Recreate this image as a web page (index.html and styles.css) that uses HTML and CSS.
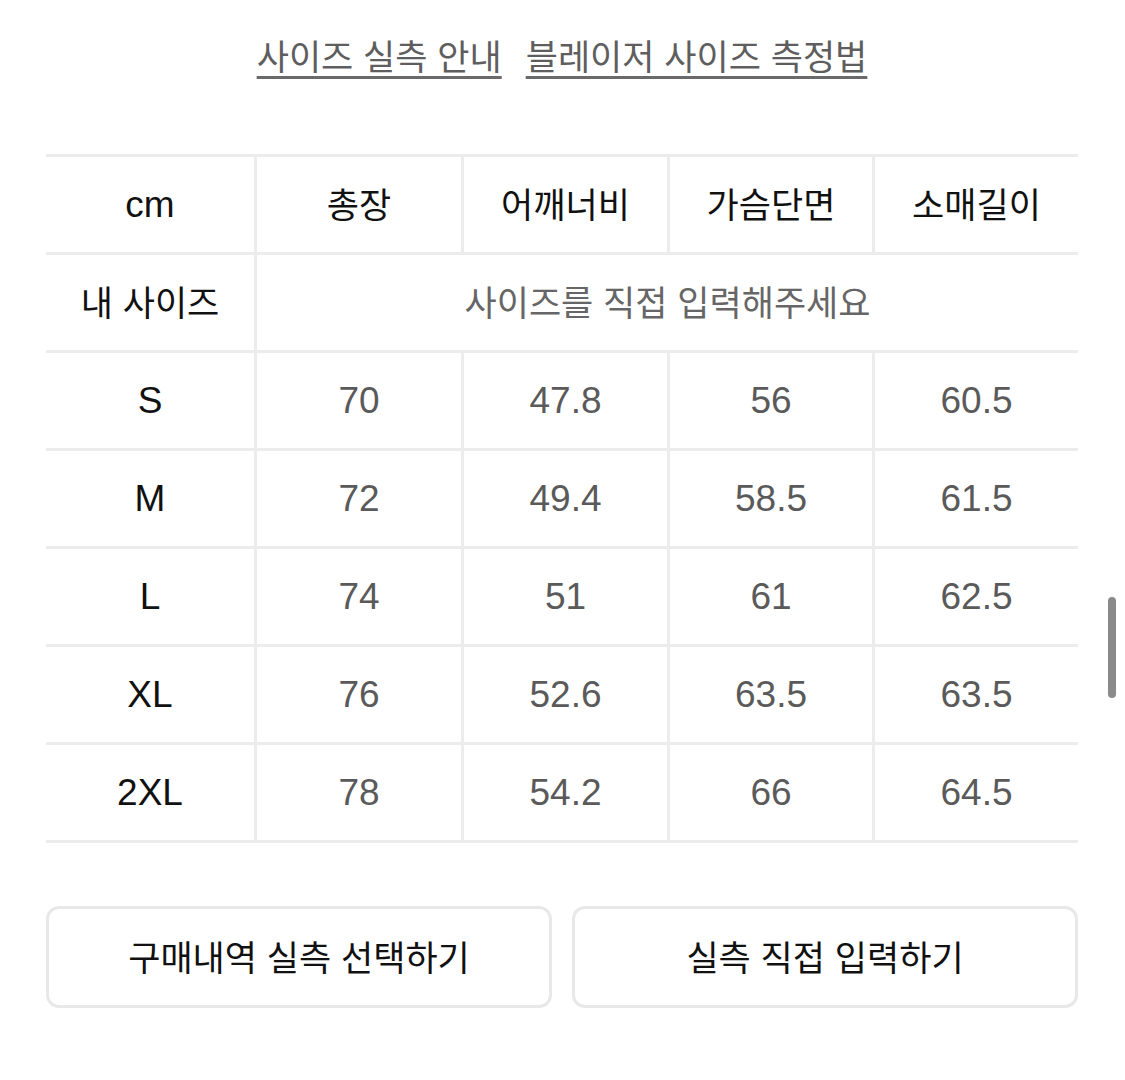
FILE: index.html
```html
<!DOCTYPE html>
<html lang="ko">
<head>
<meta charset="utf-8">
<link rel="stylesheet" href="styles.css">
</head>
<body>
<div class="page">
  <nav class="links">
    <a class="link" href="#">사이즈 실측 안내</a>
    <a class="link" href="#">블레이저 사이즈 측정법</a>
  </nav>

  <div class="table">
    <div class="cell head first en">cm</div>
    <div class="cell head ko">총장</div>
    <div class="cell head ko">어깨너비</div>
    <div class="cell head ko">가슴단면</div>
    <div class="cell head ko">소매길이</div>

    <div class="cell head first ko">내 사이즈</div>
    <div class="cell span ko">사이즈를 직접 입력해주세요</div>

    <div class="cell head first en">S</div>
    <div class="cell num">70</div>
    <div class="cell num">47.8</div>
    <div class="cell num">56</div>
    <div class="cell num">60.5</div>

    <div class="cell head first en">M</div>
    <div class="cell num">72</div>
    <div class="cell num">49.4</div>
    <div class="cell num">58.5</div>
    <div class="cell num">61.5</div>

    <div class="cell head first en">L</div>
    <div class="cell num">74</div>
    <div class="cell num">51</div>
    <div class="cell num">61</div>
    <div class="cell num">62.5</div>

    <div class="cell head first en">XL</div>
    <div class="cell num">76</div>
    <div class="cell num">52.6</div>
    <div class="cell num">63.5</div>
    <div class="cell num">63.5</div>

    <div class="cell head first en last">2XL</div>
    <div class="cell num last">78</div>
    <div class="cell num last">54.2</div>
    <div class="cell num last">66</div>
    <div class="cell num last">64.5</div>
  </div>

  <div class="actions">
    <button class="btn">구매내역 실측 선택하기</button>
    <button class="btn">실측 직접 입력하기</button>
  </div>
</div>
<div class="scrollbar"></div>
</body>
</html>
```

FILE: styles.css
```css
html, body {
  margin: 0;
  padding: 0;
  background: #ffffff;
}

body {
  width: 1125px;
  height: 1080px;
  overflow: hidden;
  position: relative;
  font-family: "Noto Sans CJK KR", "Liberation Sans", sans-serif;
}

.page {
  display: flex;
  flex-direction: column;
  padding: 0 47px 0 46px;
}

.links {
  display: flex;
  justify-content: center;
  gap: 24px;
  padding-top: 31px;
  height: 154px;
  box-sizing: border-box;
}

.link {
  font-size: 35px;
  line-height: 48px;
  color: #5e5e5e;
  text-decoration: underline;
  text-decoration-thickness: 3px;
  text-underline-offset: 6px;
  text-decoration-color: #6a6a6a;
}

.table {
  display: grid;
  grid-template-columns: 208px 207px 206px 205px 206px;
  grid-auto-rows: 98px;
  width: 1032px;
}

.cell {
  display: flex;
  align-items: center;
  justify-content: center;
  border-top: 3px solid #ececec;
  box-sizing: border-box;
  border-left: 3px solid #ececec;
}

.cell.first {
  border-left: none;
}

.cell.last {
  border-bottom: 3px solid #ececec;
  height: 101px;
}

.head {
  color: #111111;
}

.ko {
  font-family: "Noto Sans CJK KR", sans-serif;
  font-size: 35px;
  padding-bottom: 5px;
}

.en {
  font-family: "Liberation Sans", "Noto Sans CJK KR", sans-serif;
  font-size: 37px;
}

.num {
  font-family: "Liberation Sans", sans-serif;
  font-size: 37px;
  color: #5a5a5a;
}

.span {
  grid-column: 2 / 6;
  color: #666666;
}

.actions {
  display: flex;
  gap: 20px;
  margin-top: 66px;
}

.btn {
  flex: 1;
  height: 102px;
  background: #ffffff;
  border: 3px solid #e8e8e8;
  border-radius: 13px;
  font-family: "Noto Sans CJK KR", sans-serif;
  font-size: 35px;
  color: #111111;
  padding: 0 0 4px;
}

.scrollbar {
  position: absolute;
  left: 1108px;
  top: 597px;
  width: 8px;
  height: 101px;
  border-radius: 4px;
  background: #8a8a8a;
}
```
